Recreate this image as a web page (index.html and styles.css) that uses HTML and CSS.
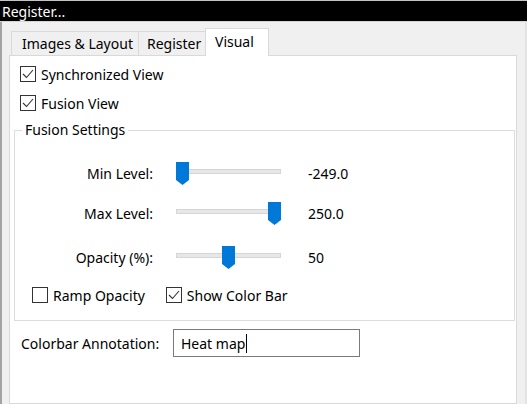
FILE: index.html
```html
<!DOCTYPE html>
<html>
<head>
<meta charset="utf-8">
<link rel="stylesheet" href="styles.css">
</head>
<body>
<div class="window">
  <div class="titlebar">Register...</div>
  <div class="client">
    <div class="tabs">
      <div class="tab t1">Images &amp; Layout</div>
      <div class="tab t2">Register</div>
      <div class="tab t3 active">Visual</div>
    </div>
    <div class="panel">
      <label class="check row1">
        <svg class="cb" viewBox="0 0 16 16"><rect x="0.5" y="0.5" width="15" height="15" fill="#fff" stroke="#333"/><polyline points="3,8 6.5,11.5 13,4" fill="none" stroke="#333" stroke-width="1.1"/></svg>
        <span>Synchronized View</span>
      </label>
      <label class="check row2">
        <svg class="cb" viewBox="0 0 16 16"><rect x="0.5" y="0.5" width="15" height="15" fill="#fff" stroke="#333"/><polyline points="3,8 6.5,11.5 13,4" fill="none" stroke="#333" stroke-width="1.1"/></svg>
        <span>Fusion View</span>
      </label>
      <fieldset class="group">
        <legend>Fusion Settings</legend>
        <div class="sliders">
          <span class="lbl">Min Level:</span>
          <div class="slider"><div class="track"></div><svg class="thumb" style="left:0px" viewBox="0 0 13 23"><polygon points="0,0 13,0 13,18 6.5,23 0,18" fill="#0078d7"/></svg></div>
          <span class="val">-249.0</span>

          <span class="lbl">Max Level:</span>
          <div class="slider"><div class="track"></div><svg class="thumb" style="left:92px" viewBox="0 0 13 23"><polygon points="0,0 13,0 13,18 6.5,23 0,18" fill="#0078d7"/></svg></div>
          <span class="val">250.0</span>

          <span class="lbl">Opacity (%):</span>
          <div class="slider"><div class="track"></div><svg class="thumb" style="left:46px" viewBox="0 0 13 23"><polygon points="0,0 13,0 13,18 6.5,23 0,18" fill="#0078d7"/></svg></div>
          <span class="val">50</span>
        </div>
        <div class="checks">
          <label class="check">
            <svg class="cb" viewBox="0 0 16 16"><rect x="0.5" y="0.5" width="15" height="15" fill="#fff" stroke="#333"/></svg>
            <span>Ramp Opacity</span>
          </label>
          <label class="check">
            <svg class="cb" viewBox="0 0 16 16"><rect x="0.5" y="0.5" width="15" height="15" fill="#fff" stroke="#333"/><polyline points="3,8 6.5,11.5 13,4" fill="none" stroke="#333" stroke-width="1.1"/></svg>
            <span>Show Color Bar</span>
          </label>
        </div>
      </fieldset>
      <div class="annot">
        <span class="annot-label">Colorbar Annotation:</span>
        <div class="input">Heat map<span class="caret"></span></div>
      </div>
    </div>
  </div>
</div>
</body>
</html>
```

FILE: styles.css
```css
html, body {
  margin: 0;
  height: 100%;
}
body {
  background: #f0f0f0;
  font-family: "Noto Sans", "Open Sans", sans-serif;
  font-size: 14px;
  color: #000;
  overflow: hidden;
}
.window {
  width: 527px;
  height: 404px;
  display: flex;
  flex-direction: column;
}
.titlebar {
  height: 20px;
  border-top: 1px solid #c4c4c4;
  border-bottom: 1px solid #d4d4d4;
  background: #000;
  color: #fff;
  line-height: 21px;
  padding-left: 2px;
  white-space: nowrap;
}
.client {
  flex: 1;
  min-height: 0;
  border-left: 2px solid #a3a3a3;
  border-right: 2px solid #e4e4e4;
  padding-left: 7px;
  display: flex;
  flex-direction: column;
}
.tabs {
  display: flex;
  align-items: flex-end;
  height: 27px;
  padding-top: 6px;
  padding-left: 2px;
}
.tab {
  box-sizing: border-box;
  height: 24px;
  line-height: 23px;
  border: 1px solid #d9d9d9;
  border-bottom: none;
  white-space: nowrap;
}
.t1 {
  width: 128px;
  padding-left: 10px;
}
.t2 {
  width: 69px;
  padding-left: 8px;
  margin-left: -1px;
}
.t3 {
  width: 64px;
  padding-left: 9px;
  margin-left: -2px;
}
.tab.active {
  height: 28px;
  line-height: 26px;
  background: #fff;
  margin-bottom: -1px;
  position: relative;
  z-index: 1;
}
.panel {
  flex: 1;
  box-sizing: border-box;
  width: 508px;
  background: #fff;
  border: 1px solid #d9d9d9;
}
.check {
  display: flex;
  align-items: center;
  gap: 5px;
  height: 20px;
  white-space: nowrap;
}
.cb {
  width: 16px;
  height: 16px;
  flex: none;
}
.row1 {
  margin: 8px 0 0 10px;
}
.row2 {
  margin: 9px 0 0 10px;
}
.group {
  margin: 7px 1px 0 4px;
  padding: 0 0 15px 0;
  border: 1px solid #dcdcdc;
  min-inline-size: 0;
}
.group legend {
  margin-left: 7px;
  padding: 0 3px;
  line-height: 20px;
}
.sliders {
  display: grid;
  grid-template-columns: 138px 105px auto;
  grid-template-rows: 40px 40px 48px;
  column-gap: 23px;
  align-items: center;
  margin-top: 13px;
}
.lbl {
  text-align: right;
  white-space: nowrap;
}
.val {
  padding-left: 4px;
}
.slider {
  position: relative;
  height: 23px;
}
.track {
  box-sizing: border-box;
  margin-top: 7px;
  height: 5px;
  border: 1px solid #d6d6d6;
  background: #e7e7e7;
}
.thumb {
  position: absolute;
  top: 0;
  width: 13px;
  height: 23px;
}
.checks {
  display: flex;
  gap: 21px;
  margin-top: 4px;
  padding-left: 17px;
}
.annot {
  display: flex;
  align-items: center;
  margin-top: 8px;
  padding-left: 11px;
}
.annot-label {
  width: 152px;
  flex: none;
  white-space: nowrap;
}
.input {
  box-sizing: border-box;
  width: 187px;
  height: 28px;
  border: 1px solid #7a7a7a;
  padding-left: 7px;
  display: flex;
  align-items: center;
  white-space: pre;
}
.caret {
  display: inline-block;
  width: 1px;
  height: 19px;
  background: #000;
  margin-left: 1px;
}
```
